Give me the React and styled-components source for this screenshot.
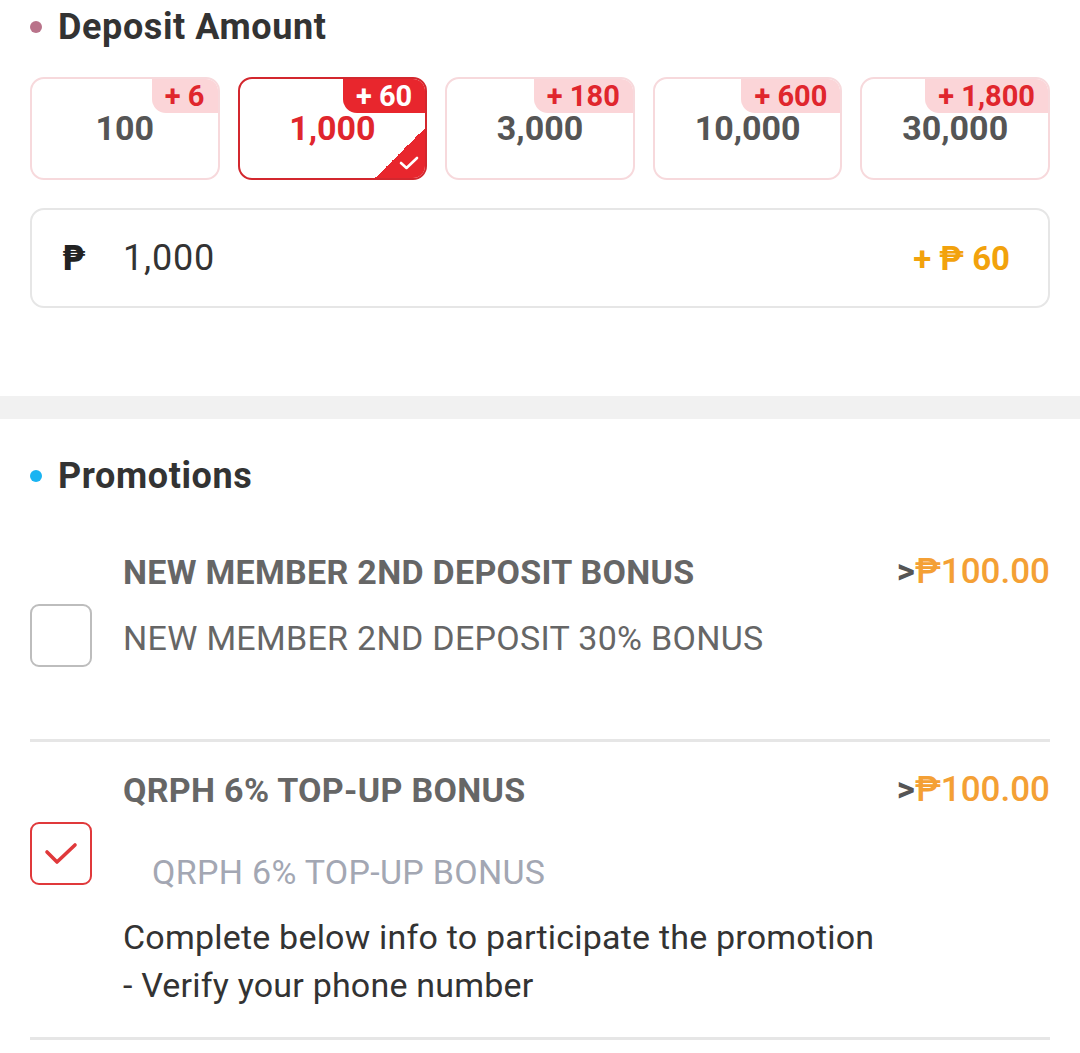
import React from 'react'
import styled, { createGlobalStyle } from 'styled-components'

const GlobalStyle = createGlobalStyle`
  body {
    margin: 0;
    background: #fff;
    font-family: Roboto, "Noto Sans", "DejaVu Sans", sans-serif;
  }
`

const Page = styled.div`
  width: 1080px;
  background: #fff;
`
const Section = styled.section`
  padding: ${p => p.$pad || '0 30px'};
`
const SectionTitle = styled.h2`
  display: flex;
  align-items: center;
  margin: 0;
  font-size: 36px;
  font-weight: 700;
  letter-spacing: 0.6px;
  color: #333;
  line-height: 40px;
  &::before {
    content: '';
    width: 12px;
    height: 12px;
    border-radius: 50%;
    background: ${p => p.$dot};
    margin: 0 16px 0 0;
  }
`
const AmountGrid = styled.div`
  display: grid;
  grid-template-columns: repeat(5, 1fr);
  gap: 18px;
  margin-top: 30px;
`
const AmountCard = styled.div`
  position: relative;
  height: 103px;
  box-sizing: border-box;
  border: 2px solid ${p => (p.$active ? '#d3272e' : '#f7d9dc')};
  border-radius: 14px;
  overflow: hidden;
  display: flex;
  justify-content: center;
  align-items: flex-start;
  padding-top: 32px;
  font-size: 34px;
  line-height: 34px;
  font-weight: 700;
  color: ${p => (p.$active ? '#e0262d' : '#555')};
`
const Badge = styled.span`
  position: absolute;
  top: 0;
  right: 0;
  height: 34px;
  padding: 0 13px;
  min-width: 40px;
  display: flex;
  align-items: center;
  justify-content: center;
  border-bottom-left-radius: 14px;
  background: ${p => (p.$active ? '#e8262d' : '#fbd5d8')};
  color: ${p => (p.$active ? '#fff' : '#e0262d')};
  font-size: 29px;
  line-height: 29px;
  font-weight: 700;
`
const CornerCheck = styled.span`
  position: absolute;
  right: 0;
  bottom: 0;
  width: 50px;
  height: 50px;
  background: linear-gradient(135deg, transparent 50%, #e8262d 50%);
  svg {
    position: absolute;
    right: 6px;
    bottom: 8px;
  }
`
const InputBox = styled.div`
  margin-top: 28px;
  height: 100px;
  box-sizing: border-box;
  border: 2px solid #e6e6e6;
  border-radius: 14px;
  display: flex;
  align-items: center;
  padding: 0 38px 0 30px;
`
const Currency = styled.span`
  font-size: 33px;
  font-weight: 700;
  color: #222;
  font-family: "DejaVu Sans", sans-serif;
  width: 61px;
`
const InputValue = styled.span`
  flex: 1;
  font-size: 36px;
  letter-spacing: 0.8px;
  color: #333;
`
const Bonus = styled.span`
  font-size: 33px;
  font-weight: 700;
  color: #f2a20c;
`
const Band = styled.div`
  height: 23px;
  background: #f1f1f1;
  margin-top: 88px;
`
const PromoItem = styled.div`
  margin: 0 30px;
  padding: ${p => p.$pad};
  border-bottom: 3px solid #e6e6e6;
`
const PromoHead = styled.div`
  display: flex;
  justify-content: space-between;
  align-items: center;
  padding-left: 93px;
  line-height: 36px;
`
const PromoTitle = styled.span`
  font-size: 34px;
  font-weight: 700;
  letter-spacing: 0.3px;
  color: #666;
`
const Price = styled.span`
  font-size: 35px;
  font-weight: 500;
  color: #f4a035;
  b {
    color: #555;
    font-weight: 700;
  }
`
const PromoBody = styled.div`
  display: flex;
  align-items: flex-start;
  margin-top: 14px;
`
const Check = styled.div`
  flex: none;
  width: 62px;
  height: 63px;
  box-sizing: border-box;
  border: 2.5px solid ${p => (p.$checked ? '#e0393b' : '#bdbdbd')};
  border-radius: 9px;
  display: flex;
  align-items: center;
  justify-content: center;
  margin-right: 31px;
`
const Desc = styled.div`
  font-size: 34px;
  letter-spacing: 0.3px;
  color: #666;
  line-height: 36px;
  padding-top: ${p => p.$top || 0}px;
`
const SubTitle = styled.p`
  margin: 0;
  padding-left: 29px;
  color: #a3a7b3;
  line-height: 36px;
`
const Note = styled.p`
  margin: 23px 0 0;
  color: #333;
  line-height: 48px;
  letter-spacing: 0.2px;
`

const amounts = [
  { value: '100', bonus: '+ 6' },
  { value: '1,000', bonus: '+ 60', active: true },
  { value: '3,000', bonus: '+ 180' },
  { value: '10,000', bonus: '+ 600' },
  { value: '30,000', bonus: '+ 1,800' },
]

export default function App() {
  return (
    <Page>
      <GlobalStyle />
      <Section $pad="7px 30px 0">
        <SectionTitle $dot="#b9738a">Deposit Amount</SectionTitle>
        <AmountGrid>
          {amounts.map(a => (
            <AmountCard key={a.value} $active={a.active}>
              <Badge $active={a.active}>{a.bonus}</Badge>
              {a.value}
              {a.active && (
                <CornerCheck>
                  <svg width="20" height="14" viewBox="0 0 20 14">
                    <path d="M2 7l5.5 5L18 2" fill="none" stroke="#fff" strokeWidth="2.6" strokeLinecap="round" strokeLinejoin="round" />
                  </svg>
                </CornerCheck>
              )}
            </AmountCard>
          ))}
        </AmountGrid>
        <InputBox>
          <Currency>₱</Currency>
          <InputValue>1,000</InputValue>
          <Bonus>+ ₱ 60</Bonus>
        </InputBox>
      </Section>
      <Band />
      <Section $pad="37px 30px 0">
        <SectionTitle $dot="#1ab4f2">Promotions</SectionTitle>
      </Section>
      <PromoItem $pad="58px 0 72px">
        <PromoHead>
          <PromoTitle>NEW MEMBER 2ND DEPOSIT BONUS</PromoTitle>
          <Price><b>&gt;</b>₱100.00</Price>
        </PromoHead>
        <PromoBody>
          <Check />
          <Desc $top={16}>NEW MEMBER 2ND DEPOSIT 30% BONUS</Desc>
        </PromoBody>
      </PromoItem>
      <PromoItem $pad="30px 0 28px">
        <PromoHead>
          <PromoTitle>QRPH 6% TOP-UP BONUS</PromoTitle>
          <Price><b>&gt;</b>₱100.00</Price>
        </PromoHead>
        <PromoBody>
          <Check $checked>
            <svg width="34" height="26" viewBox="0 0 34 26">
              <path d="M3 11l10 10L31 4" fill="none" stroke="#e0393b" strokeWidth="3.6" strokeLinecap="round" strokeLinejoin="round" />
            </svg>
          </Check>
          <Desc $top={32}>
            <SubTitle>QRPH 6% TOP-UP BONUS</SubTitle>
            <Note>
              Complete below info to participate the promotion
              <br />
              - Verify your phone number
            </Note>
          </Desc>
        </PromoBody>
      </PromoItem>
    </Page>
  )
}
